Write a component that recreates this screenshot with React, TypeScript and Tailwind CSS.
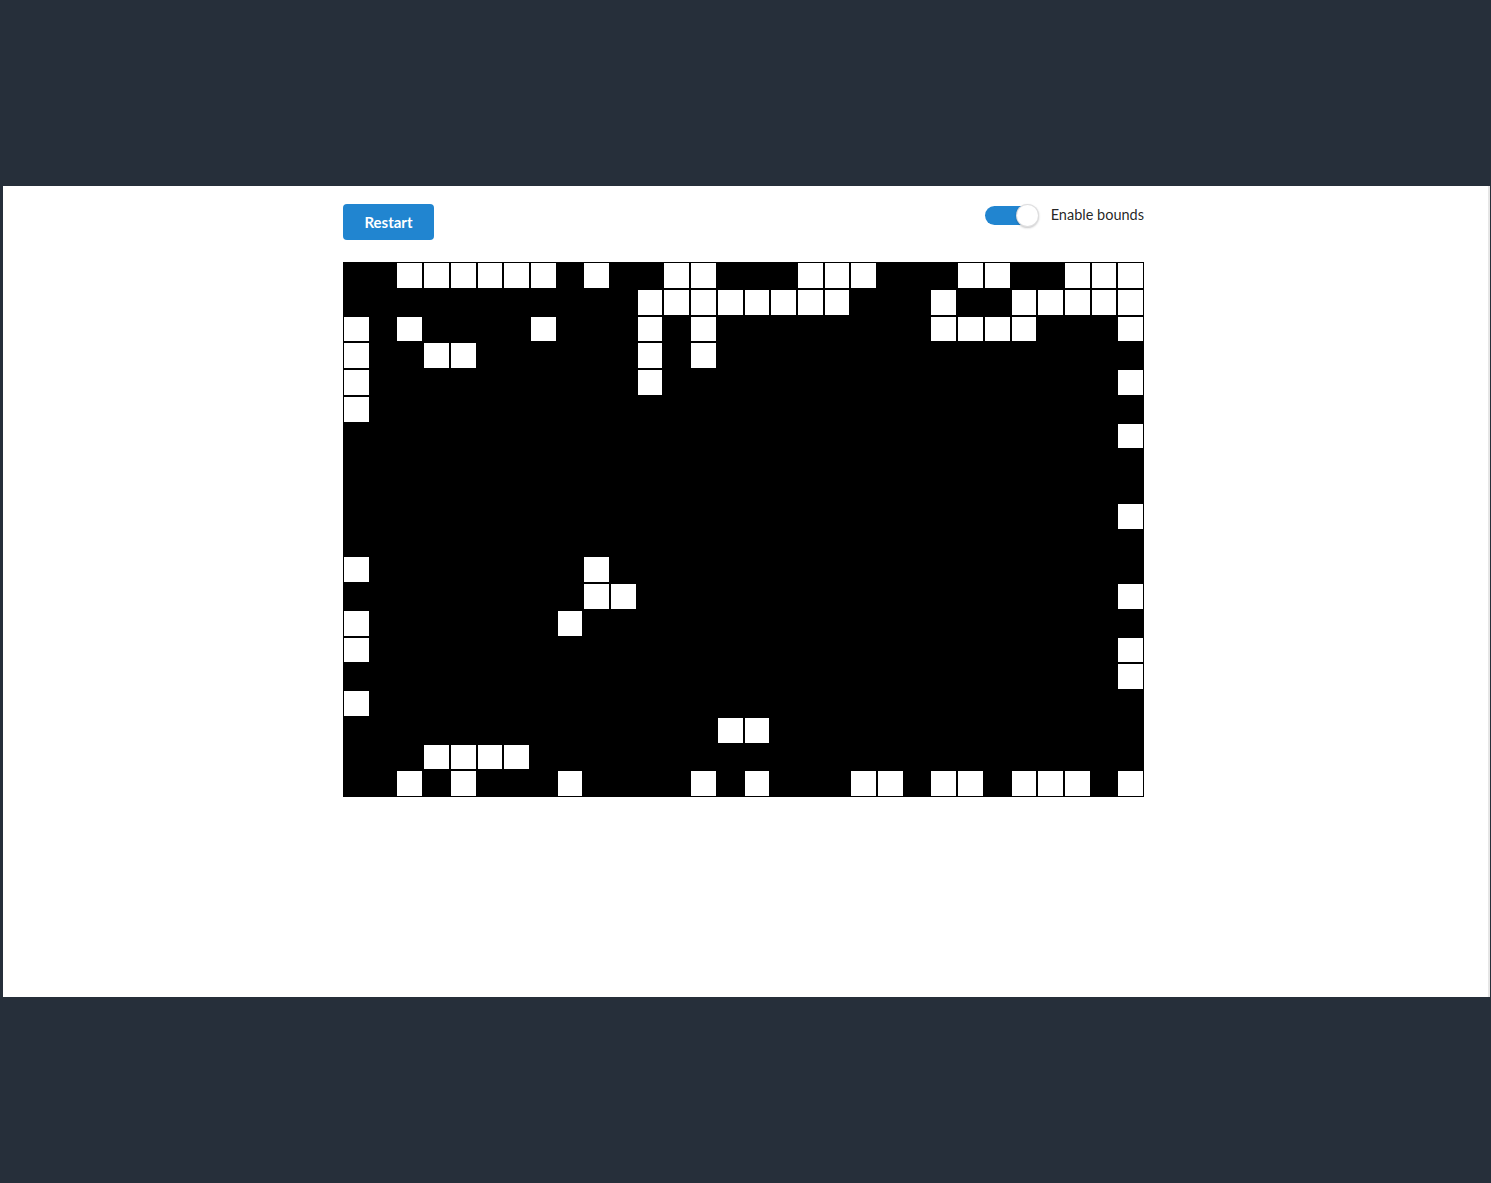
import React from "react";

const ROWS: number[][] = [
  [2, 3, 4, 5, 6, 7, 9, 12, 13, 17, 18, 19, 23, 24, 27, 28, 29],
  [11, 12, 13, 14, 15, 16, 17, 18, 22, 25, 26, 27, 28, 29],
  [0, 2, 7, 11, 13, 22, 23, 24, 25, 29],
  [0, 3, 4, 11, 13],
  [0, 11, 29],
  [0],
  [29],
  [],
  [],
  [29],
  [],
  [0, 9],
  [9, 10, 29],
  [0, 8],
  [0, 29],
  [29],
  [0],
  [14, 15],
  [3, 4, 5, 6],
  [2, 4, 8, 13, 15, 19, 20, 22, 23, 25, 26, 27, 29],
];

export default function App() {
  const cells: React.ReactNode[] = [];
  ROWS.forEach((row, r) => {
    for (let c = 0; c < 30; c++) {
      const alive = row.includes(c);
      cells.push(
        <div
          key={`${r}-${c}`}
          className={alive ? "border border-black bg-white" : "border border-black bg-black"}
        />
      );
    }
  });

  return (
    <div
      className="min-h-screen bg-[#262f3a] pt-[186px] pb-[186px]"
      style={{ fontFamily: "Lato, 'Open Sans', sans-serif" }}
    >
      <div className="ml-[3px] mr-[1px] h-[811px] bg-white border-r-2 border-[#e6e6e6]">
        <div className="ml-[340px] w-[801px] pt-[18px]">
          <div className="flex items-start justify-between">
            <button className="h-[36px] w-[91px] rounded-[4px] bg-[#2185d0] text-[15px] font-bold text-white">
              Restart
            </button>
            <div className="flex items-center">
              <div className="relative h-[23px] w-[54px]">
                <div className="absolute left-0 top-[2px] h-[19px] w-[52px] rounded-full bg-[#2185d0]" />
                <div className="absolute right-0 top-0 h-[23px] w-[23px] rounded-full bg-white shadow-[0_1px_2px_0_rgba(34,36,38,0.25),0_0_0_1px_rgba(34,36,38,0.15)_inset]" />
              </div>
              <span className="mb-[2px] ml-[12px] text-[14.5px] text-[rgba(0,0,0,0.87)]">Enable bounds</span>
            </div>
          </div>
          <div className="mt-[22px] grid h-[535px] w-[801px] grid-cols-[repeat(30,minmax(0,1fr))] grid-rows-[repeat(20,minmax(0,1fr))] bg-black">
            {cells}
          </div>
        </div>
      </div>
    </div>
  );
}
